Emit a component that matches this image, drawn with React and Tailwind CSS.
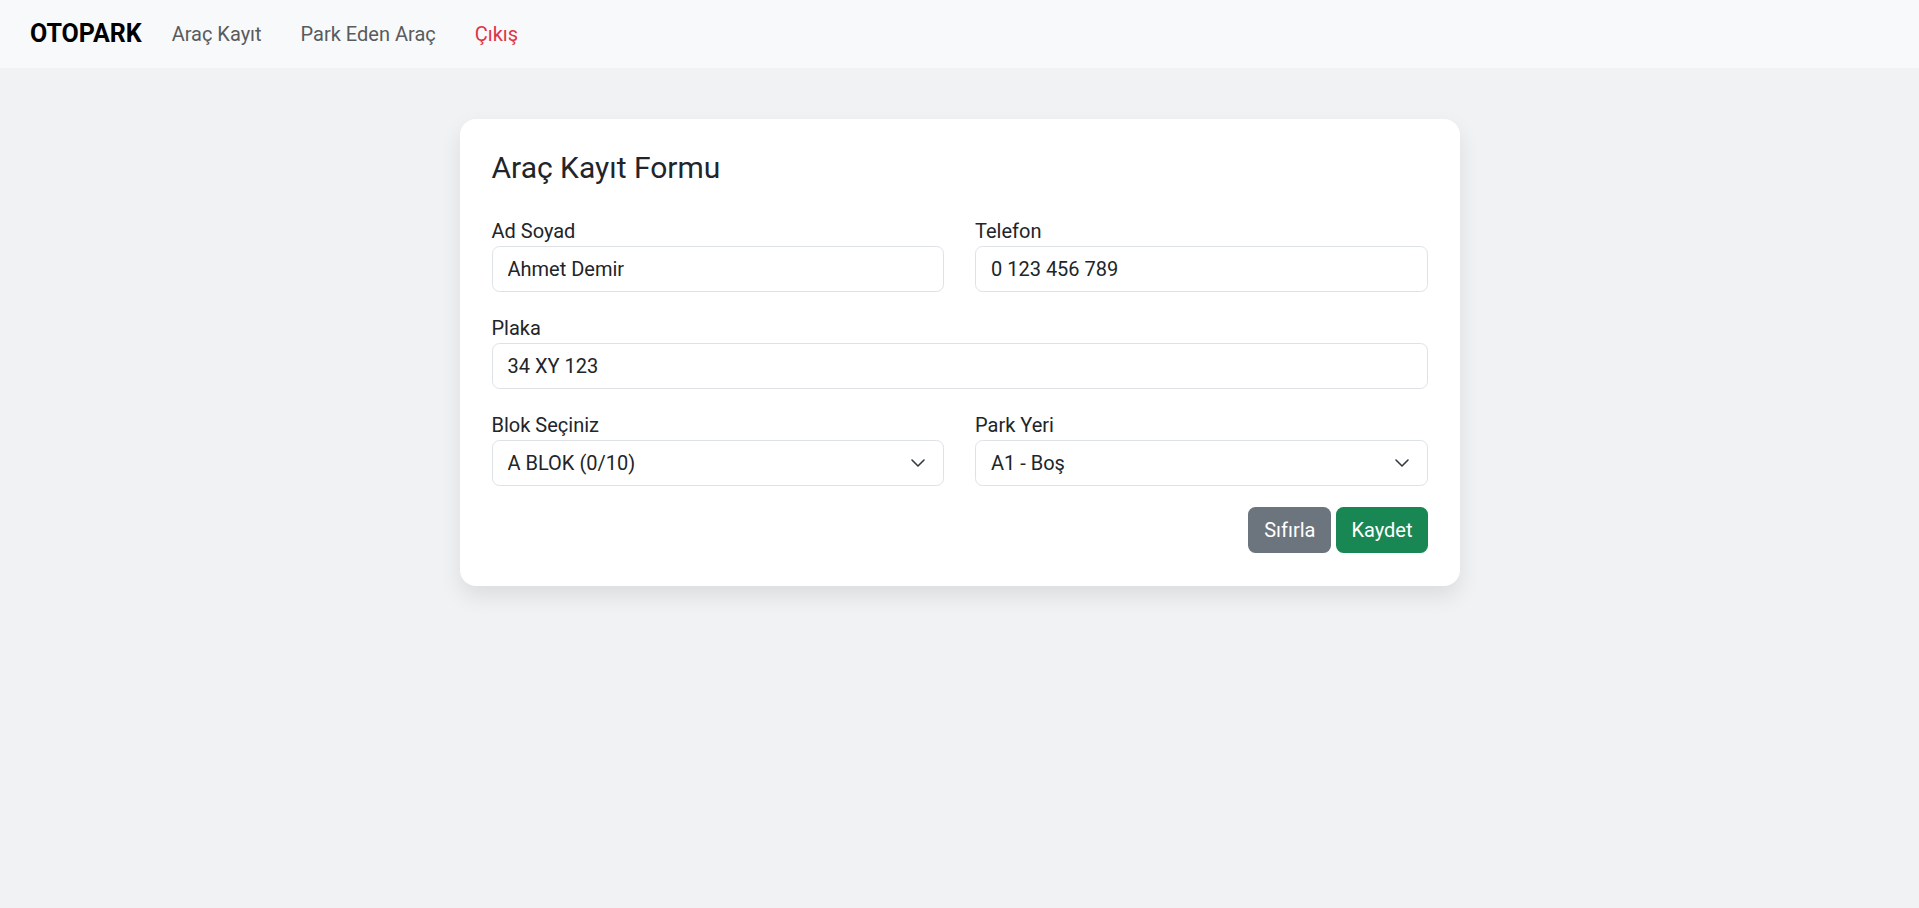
import React, { useState } from "react";

const Chevron = () => (
  <svg
    className="pointer-events-none absolute right-[18px] top-1/2 -translate-y-1/2"
    width="16"
    height="16"
    viewBox="0 0 16 16"
    fill="none"
    stroke="#343a40"
    strokeWidth="1.6"
    strokeLinecap="round"
    strokeLinejoin="round"
  >
    <path d="m2 5 6 6 6-6" />
  </svg>
);

const App = () => {
  const [form, setForm] = useState({
    adSoyad: "Ahmet Demir",
    telefon: "0 123 456 789",
    plaka: "34 XY 123",
    blok: "A",
    parkYeri: "A1",
  });

  const handleChange = (e) => {
    const { name, value } = e.target;
    setForm({ ...form, [name]: value });
  };

  // Input stili
  const inputClass =
    "block w-full h-[46px] px-[15px] bg-white border border-[#dee2e6] rounded-[7.5px] text-[20px] text-[#212529] outline-none";

  return (
    <div className="min-h-screen bg-[#f1f2f4] font-['Roboto',sans-serif] text-[#212529]">
      {/* Navbar */}
      <nav className="h-[68px] bg-[#f8f9fa] flex items-center pl-[30px]">
        <span className="text-[25px] font-bold text-black mr-[30px]">OTOPARK</span>
        <div className="flex items-center gap-[39px] text-[20px]">
          <a className="text-[#595b5d]">Araç Kayıt</a>
          <a className="text-[#595b5d]">Park Eden Araç</a>
          <a className="text-[#dc3545]">Çıkış</a>
        </div>
      </nav>

      {/* Form kartı */}
      <div className="pt-[51px]">
        <div className="mx-auto w-[1000px] bg-white rounded-[16px] shadow-[0_10px_22px_rgba(0,0,0,0.09)] px-8 pt-[31px] pb-[33px]">
          <h4 className="text-[30px] leading-[36px] mb-[30px]">Araç Kayıt Formu</h4>

          <div className="grid grid-cols-2 gap-x-[31px] gap-y-[21px]">
            <div>
              <label className="block text-[20px] leading-[30px]">Ad Soyad</label>
              <input
                name="adSoyad"
                value={form.adSoyad}
                onChange={handleChange}
                className={inputClass}
              />
            </div>
            <div>
              <label className="block text-[20px] leading-[30px]">Telefon</label>
              <input
                name="telefon"
                value={form.telefon}
                onChange={handleChange}
                className={inputClass}
              />
            </div>
            <div className="col-span-2">
              <label className="block text-[20px] leading-[30px]">Plaka</label>
              <input
                name="plaka"
                value={form.plaka}
                onChange={handleChange}
                className={inputClass}
              />
            </div>
            <div>
              <label className="block text-[20px] leading-[30px]">Blok Seçiniz</label>
              <div className="relative">
                <select
                  name="blok"
                  value={form.blok}
                  onChange={handleChange}
                  className={`${inputClass} appearance-none pr-[50px]`}
                >
                  <option value="A">A BLOK (0/10)</option>
                  <option value="B">B BLOK (0/10)</option>
                </select>
                <Chevron />
              </div>
            </div>
            <div>
              <label className="block text-[20px] leading-[30px]">Park Yeri</label>
              <div className="relative">
                <select
                  name="parkYeri"
                  value={form.parkYeri}
                  onChange={handleChange}
                  className={`${inputClass} appearance-none pr-[50px]`}
                >
                  <option value="A1">A1 - Boş</option>
                  <option value="A2">A2 - Boş</option>
                </select>
                <Chevron />
              </div>
            </div>
          </div>

          <div className="flex justify-end gap-[5px] mt-[21px]">
            <button className="h-[46px] px-[16px] rounded-[7.5px] bg-[#6c757d] text-white text-[20px]">
              Sıfırla
            </button>
            <button className="h-[46px] px-[15px] rounded-[7.5px] bg-[#198754] text-white text-[20px]">
              Kaydet
            </button>
          </div>
        </div>
      </div>
    </div>
  );
};

export default App;
